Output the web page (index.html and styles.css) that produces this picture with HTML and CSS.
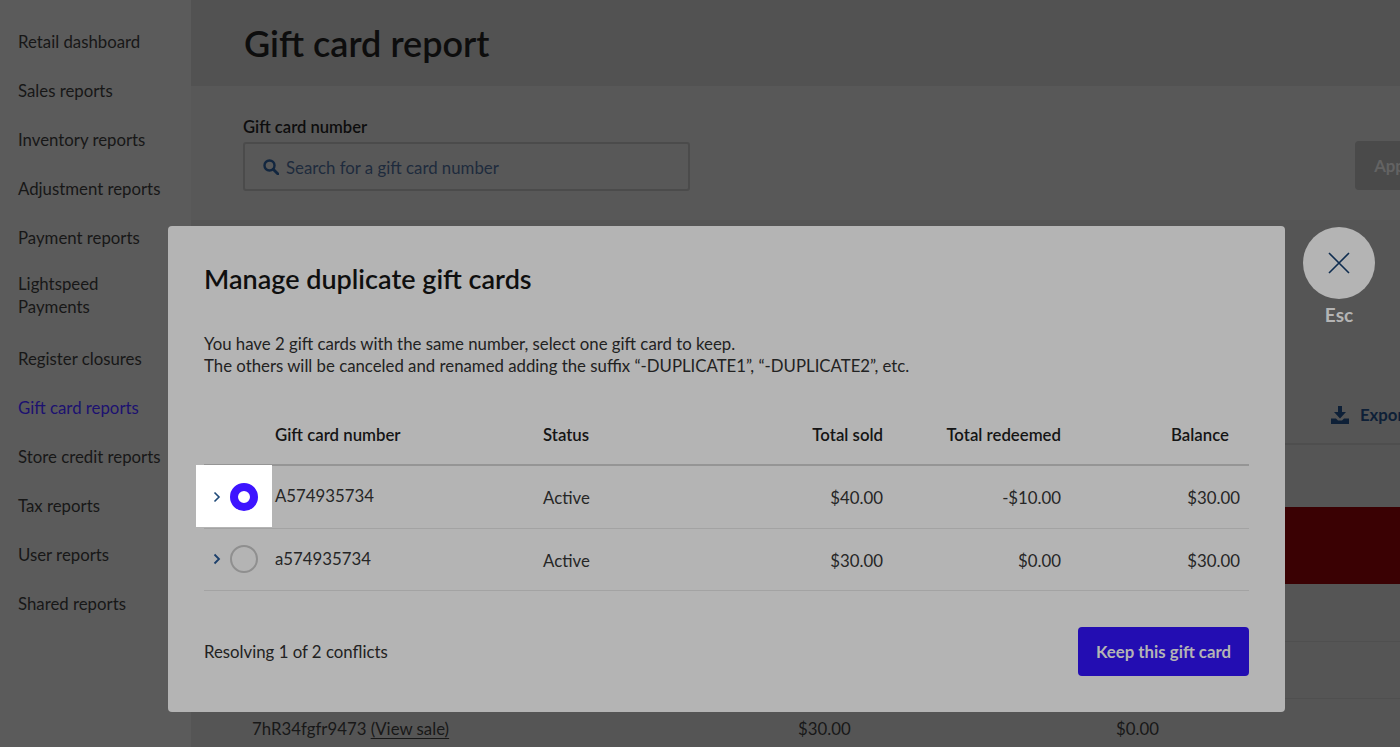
FILE: index.html
```html
<!DOCTYPE html>
<html lang="en">
<head>
<meta charset="utf-8">
<title>Gift card report</title>
<link rel="stylesheet" href="styles.css">
</head>
<body>
<div class="page">
  <nav class="sidebar">
    <a class="nav-item">Retail dashboard</a>
    <a class="nav-item">Sales reports</a>
    <a class="nav-item">Inventory reports</a>
    <a class="nav-item">Adjustment reports</a>
    <a class="nav-item">Payment reports</a>
    <a class="nav-item nav-item-wrap">Lightspeed Payments</a>
    <a class="nav-item">Register closures</a>
    <a class="nav-item nav-item-active">Gift card reports</a>
    <a class="nav-item">Store credit reports</a>
    <a class="nav-item">Tax reports</a>
    <a class="nav-item">User reports</a>
    <a class="nav-item">Shared reports</a>
  </nav>
  <main class="main">
    <header class="main-header"><h1 class="page-title">Gift card report</h1></header>
    <section class="filters">
      <div class="field">
        <label class="field-label">Gift card number</label>
        <div class="search-box">
          <svg class="search-icon" viewBox="0 0 16 16" width="16" height="16"><circle cx="6.5" cy="6.500" r="5" fill="none" stroke="#12263f" stroke-width="2.400"/><path d="M10.200 10.200 15 15" stroke="#12263f" stroke-width="2.800" stroke-linecap="round"/></svg>
          <span class="search-placeholder">Search for a gift card number</span>
        </div>
      </div>
      <button class="apply-btn">Apply</button>
    </section>
    <section class="results">
      <div class="results-toolbar">
        <span class="export">
          <svg viewBox="0 0 18 18" width="18" height="18"><path d="M7 0h4v6h4l-6 6.500L3 6h4z" fill="#0e2037"/><path d="M0 12.500h5l2 2h4l2-2h5V18H0z" fill="#0e2037"/></svg>
          Export
        </span>
      </div>
      <div class="bg-row bg-row-first"></div>
      <div class="bg-row bg-row-alert"></div>
      <div class="bg-row bg-row-short"></div>
      <div class="bg-row"></div>
      <div class="bg-row bg-row-sale">
        <span class="sale-id">7hR34fgfr9473 <u class="sale-link">(View sale)</u></span>
        <span class="sale-sold">$30.00</span>
        <span class="sale-redeemed">$0.00</span>
      </div>
    </section>
  </main>
</div>

<div class="modal">
  <h2 class="modal-title">Manage duplicate gift cards</h2>
  <p class="modal-text">You have 2 gift cards with the same number, select one gift card to keep.<br>The others will be canceled and renamed adding the suffix “-DUPLICATE1”, “-DUPLICATE2”, etc.</p>
  <div class="table">
    <div class="row row-head">
      <span></span>
      <span>Gift card number</span>
      <span>Status</span>
      <span class="num">Total sold</span>
      <span class="num">Total redeemed</span>
      <span class="num num-balance">Balance</span>
    </div>
    <div class="row row-body">
      <span class="select-cell select-cell-focus">
        <svg class="chevron" viewBox="0 0 8 12" width="8" height="12"><path d="M1.500 1.500 6 6l-4.500 4.500" fill="none" stroke="#1f4a78" stroke-width="1.600"/></svg>
        <span class="radio radio-on"></span>
      </span>
      <span class="card-no">A574935734</span>
      <span>Active</span>
      <span class="num">$40.00</span>
      <span class="num">-$10.00</span>
      <span class="num num-last">$30.00</span>
    </div>
    <div class="row row-body">
      <span class="select-cell">
        <svg class="chevron" viewBox="0 0 8 12" width="8" height="12"><path d="M1.500 1.500 6 6l-4.500 4.500" fill="none" stroke="#1b3f6b" stroke-width="1.800"/></svg>
        <span class="radio"></span>
      </span>
      <span class="card-no">a574935734</span>
      <span>Active</span>
      <span class="num">$30.00</span>
      <span class="num">$0.00</span>
      <span class="num num-last">$30.00</span>
    </div>
  </div>
  <div class="modal-footer">
    <span>Resolving 1 of 2 conflicts</span>
    <button class="keep-btn">Keep this gift card</button>
  </div>
</div>

<div class="esc">
  <span class="esc-circle">
    <svg viewBox="0 0 22 22" width="22" height="22"><path d="M1 1l20 20M21 1 1 21" fill="none" stroke="#0f2d50" stroke-width="1.600"/></svg>
  </span>
  <span class="esc-label">Esc</span>
</div>
</body>
</html>
```
FILE: styles.css
```css
* { box-sizing: border-box; }
html, body { margin: 0; height: 747px; overflow: hidden; }
body { font-family: Lato, "Open Sans", sans-serif; font-size: 16.8px; line-height: 23px; color: #222; background: #5b5b5b; position: relative; }

.page { display: grid; grid-template-columns: 191px 1300px; height: 747px; }

.sidebar { background: #5b5b5b; padding: 30px 0 0 18px; display: flex; flex-direction: column; color: #171717; }
.nav-item { display: block; margin-bottom: 26px; width: 110px; white-space: nowrap; }
.nav-item-wrap { white-space: normal; margin-top: -3px; margin-bottom: 29px; }
.nav-item-active { color: #1c1170; }

.main { background: #565656; overflow: hidden; }
.main-header { height: 86px; background: #525252; padding: 0 0 0 53px; display: flex; align-items: center; }
.page-title { margin: 0; font-size: 36px; line-height: 44px; font-weight: 600; color: #0d0d0d; }

.filters { height: 134px; background: #585858; padding: 30px 54px 0 52px; display: flex; justify-content: space-between; align-items: flex-start; }
.field-label { display: block; font-weight: 600; font-size: 16.6px; color: #0d0d0d; margin-bottom: 3px; line-height: 23px; }
.search-box { width: 447px; height: 49px; border: 2px solid #4b4b4b; border-radius: 3px; padding: 1px 0 0 18px; display: flex; align-items: center; gap: 7px; }
.search-placeholder { color: #1e2b3d; }
.apply-btn { margin-top: 25px; width: 82px; height: 49px; border: 0; border-radius: 4px; background: #4a4a4a; color: #636363; font: 700 16.8px Lato, sans-serif; }

.results { background: #555; }
.results-toolbar { height: 225px; border-bottom: 2px solid #4e4e4e; padding: 183px 81px 0 0; display: flex; justify-content: flex-end; }
.export { display: flex; align-items: center; gap: 11px; height: 23px; font-weight: 700; color: #0e2037; }
.bg-row { height: 57px; border-bottom: 1px solid #4f4f4f; }
.bg-row-first { height: 62px; border-bottom: 0; }
.bg-row-alert { height: 77px; background: #3a0103; border: 0; }
.bg-row-short { height: 58px; }
.bg-row-sale { height: 60px; border: 0; display: grid; grid-template-columns: 546px 318px auto; padding: 18px 0 0 61px; color: #181818; }
.sale-link { text-decoration-thickness: 1px; text-underline-offset: 3px; }

.modal { position: absolute; left: 168px; top: 226px; width: 1117px; height: 486px; background: #b4b4b4; border-radius: 4px; padding: 36px; }
.modal-title { margin: 0; font-size: 27px; line-height: 34px; font-weight: 600; color: #0f0f0f; }
.modal-text { margin: 37px 0 0; line-height: 22px; color: #222; }

.table { margin-top: 30px; }
.row { display: grid; grid-template-columns: 71px 268px 120px 220px 178px 188px; align-items: center; border-bottom: 1px solid #9b9b9b; }
.row-head { height: 59px; font-weight: 600; color: #151515; padding-bottom: 2px; border-bottom: 2px solid #959595; }
.row-body { height: 62.5px; padding-top: 2px; color: #262626; border-bottom-color: #a3a3a3; }
.num { text-align: right; }
.num-balance { padding-right: 20px; }
.num-last { padding-right: 9px; }
.card-no { position: relative; top: -2px; }

.select-cell { display: flex; align-items: center; align-self: start; height: calc(100% + 2px); margin-top: -3px; padding: 2px 0 0 9px; gap: 9px; }
.select-cell-focus { background: #fff; margin-left: -8px; margin-right: 3px; padding-left: 17px; }
.chevron { flex: none; }
.radio { width: 28px; height: 28px; border-radius: 50%; border: 2px solid #8f8f8f; flex: none; }
.radio-on { border: 8px solid #3d14ff; background: #fff; }

.modal-footer { display: flex; justify-content: space-between; align-items: center; margin-top: 36px; color: #222; }
.keep-btn { width: 171px; height: 49px; border: 0; border-radius: 4px; background: #230db2; color: #b4b4b4; font: 700 16.8px Lato, sans-serif; }

.esc { position: absolute; left: 1303px; top: 227px; width: 72px; display: flex; flex-direction: column; align-items: center; gap: 4px; }
.esc-circle { width: 72px; height: 72px; border-radius: 50%; background: #b4b4b4; display: flex; align-items: center; justify-content: center; }
.esc-label { font-size: 19px; font-weight: 700; color: #b4b4b4; }
```
